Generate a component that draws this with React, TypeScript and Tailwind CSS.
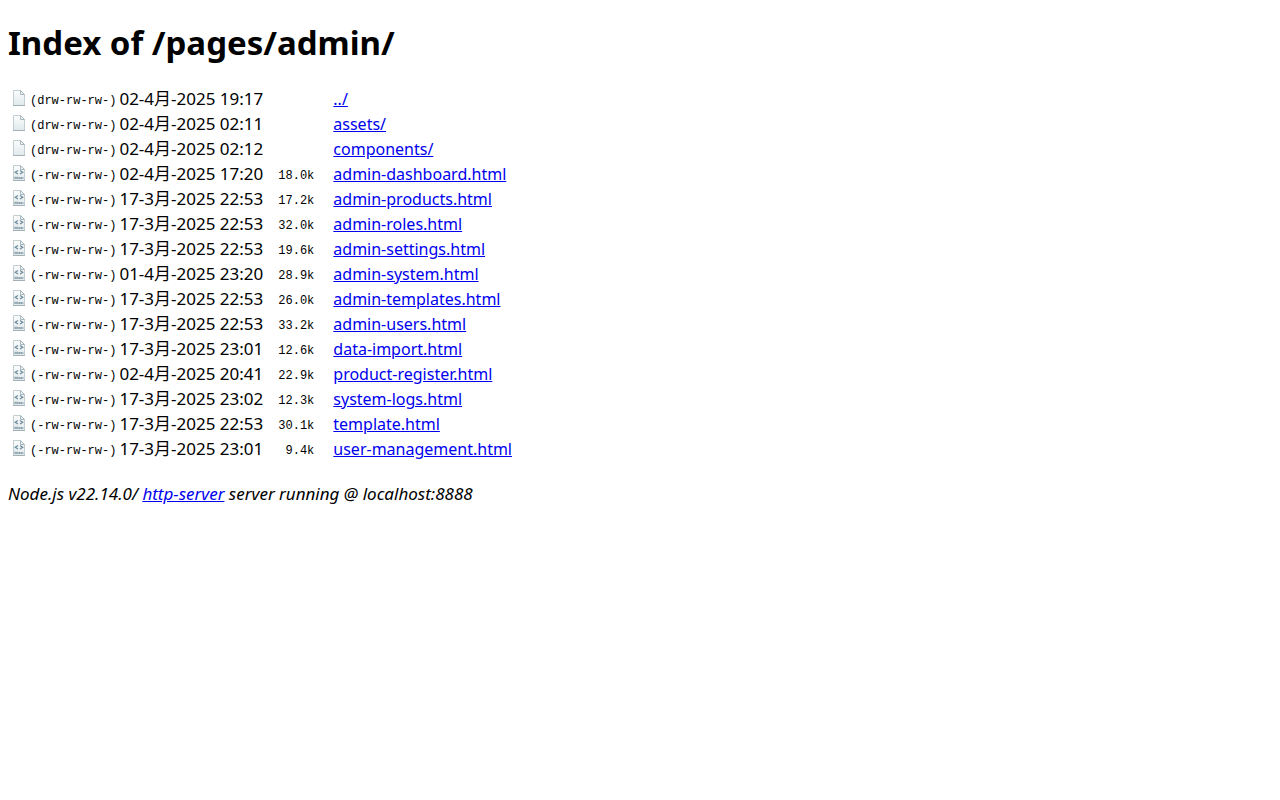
import React from "react";

type Entry = { perms: string; date: string; size: string; name: string };

const entries: Entry[] = [
  { perms: "(drw-rw-rw-)", date: "02-4月-2025 19:17", size: "", name: "../" },
  { perms: "(drw-rw-rw-)", date: "02-4月-2025 02:11", size: "", name: "assets/" },
  { perms: "(drw-rw-rw-)", date: "02-4月-2025 02:12", size: "", name: "components/" },
  { perms: "(-rw-rw-rw-)", date: "02-4月-2025 17:20", size: "18.0k", name: "admin-dashboard.html" },
  { perms: "(-rw-rw-rw-)", date: "17-3月-2025 22:53", size: "17.2k", name: "admin-products.html" },
  { perms: "(-rw-rw-rw-)", date: "17-3月-2025 22:53", size: "32.0k", name: "admin-roles.html" },
  { perms: "(-rw-rw-rw-)", date: "17-3月-2025 22:53", size: "19.6k", name: "admin-settings.html" },
  { perms: "(-rw-rw-rw-)", date: "01-4月-2025 23:20", size: "28.9k", name: "admin-system.html" },
  { perms: "(-rw-rw-rw-)", date: "17-3月-2025 22:53", size: "26.0k", name: "admin-templates.html" },
  { perms: "(-rw-rw-rw-)", date: "17-3月-2025 22:53", size: "33.2k", name: "admin-users.html" },
  { perms: "(-rw-rw-rw-)", date: "17-3月-2025 23:01", size: "12.6k", name: "data-import.html" },
  { perms: "(-rw-rw-rw-)", date: "02-4月-2025 20:41", size: "22.9k", name: "product-register.html" },
  { perms: "(-rw-rw-rw-)", date: "17-3月-2025 23:02", size: "12.3k", name: "system-logs.html" },
  { perms: "(-rw-rw-rw-)", date: "17-3月-2025 22:53", size: "30.1k", name: "template.html" },
  { perms: "(-rw-rw-rw-)", date: "17-3月-2025 23:01", size: "9.4k", name: "user-management.html" },
];

function FileIcon({ html }: { html: boolean }) {
  return (
    <svg width="16" height="16" viewBox="0 0 16 16" className="block" aria-hidden="true">
      <defs>
        <linearGradient id="sheet" x1="0" y1="0" x2="0" y2="1">
          <stop offset="0" stopColor="#fcfdfd" />
          <stop offset="1" stopColor="#dfe8eb" />
        </linearGradient>
      </defs>
      <path d="M2.5 .5h7l4 4v11h-11z" fill="url(#sheet)" stroke="#c3ced2" />
      <path d="M2 15.5h12" stroke="#a3b0b5" />
      <path d="M9.5 .5v4h4z" fill="#eef3f5" stroke="#a9b8be" />
      {html && (
        <>
          <path d="M7 5.5 4.2 7.2 7 9M9 5.5l2.8 1.7L9 9" fill="none" stroke="#6f8b9b" strokeWidth="1.2" />
          <path d="M3.5 12h9v2h-9z" fill="#a9bac3" />
          <path d="M4 11.5V14M6 11.5V14M8.5 12v2M10.5 12v2" fill="none" stroke="#8299a5" strokeWidth=".7" />
        </>
      )}
    </svg>
  );
}

export default function App() {
  return (
    <main className="px-2 pt-5 font-['Noto_Sans','Noto_Sans_CJK_SC',sans-serif] text-[16px] leading-[21px] text-black">
      <h1 className="text-[33px] leading-[45px] font-bold">Index of /pages/admin/</h1>
      <table className="mt-[21px] border-separate border-spacing-[2px] whitespace-nowrap">
        <tbody>
          {entries.map((e) => (
            <tr key={e.name} className="h-[23px]">
              <td className="w-[18px] px-px pt-0 pb-1"><FileIcon html={e.size !== ""} /></td>
              <td className="align-bottom font-['Liberation_Mono',monospace] text-[12px] leading-[19px]">{e.perms}</td>
              <td className="px-px pb-[2px] text-[17px]">{e.date}</td>
              <td className="w-[49px] px-px align-bottom text-right font-['Liberation_Mono',monospace] text-[12px] leading-[19px]">{e.size}</td>
              <td className="py-px pr-px pl-4">
                <a href={e.name} className="text-[#0000ee] underline">{e.name}</a>
              </td>
            </tr>
          ))}
        </tbody>
      </table>
      <address className="mt-5 text-[17px] italic">
        Node.js v22.14.0/ <a href="https://github.com/http-party/http-server" className="text-[#0000ee] underline">http-server</a> server running @ localhost:8888
      </address>
    </main>
  );
}
